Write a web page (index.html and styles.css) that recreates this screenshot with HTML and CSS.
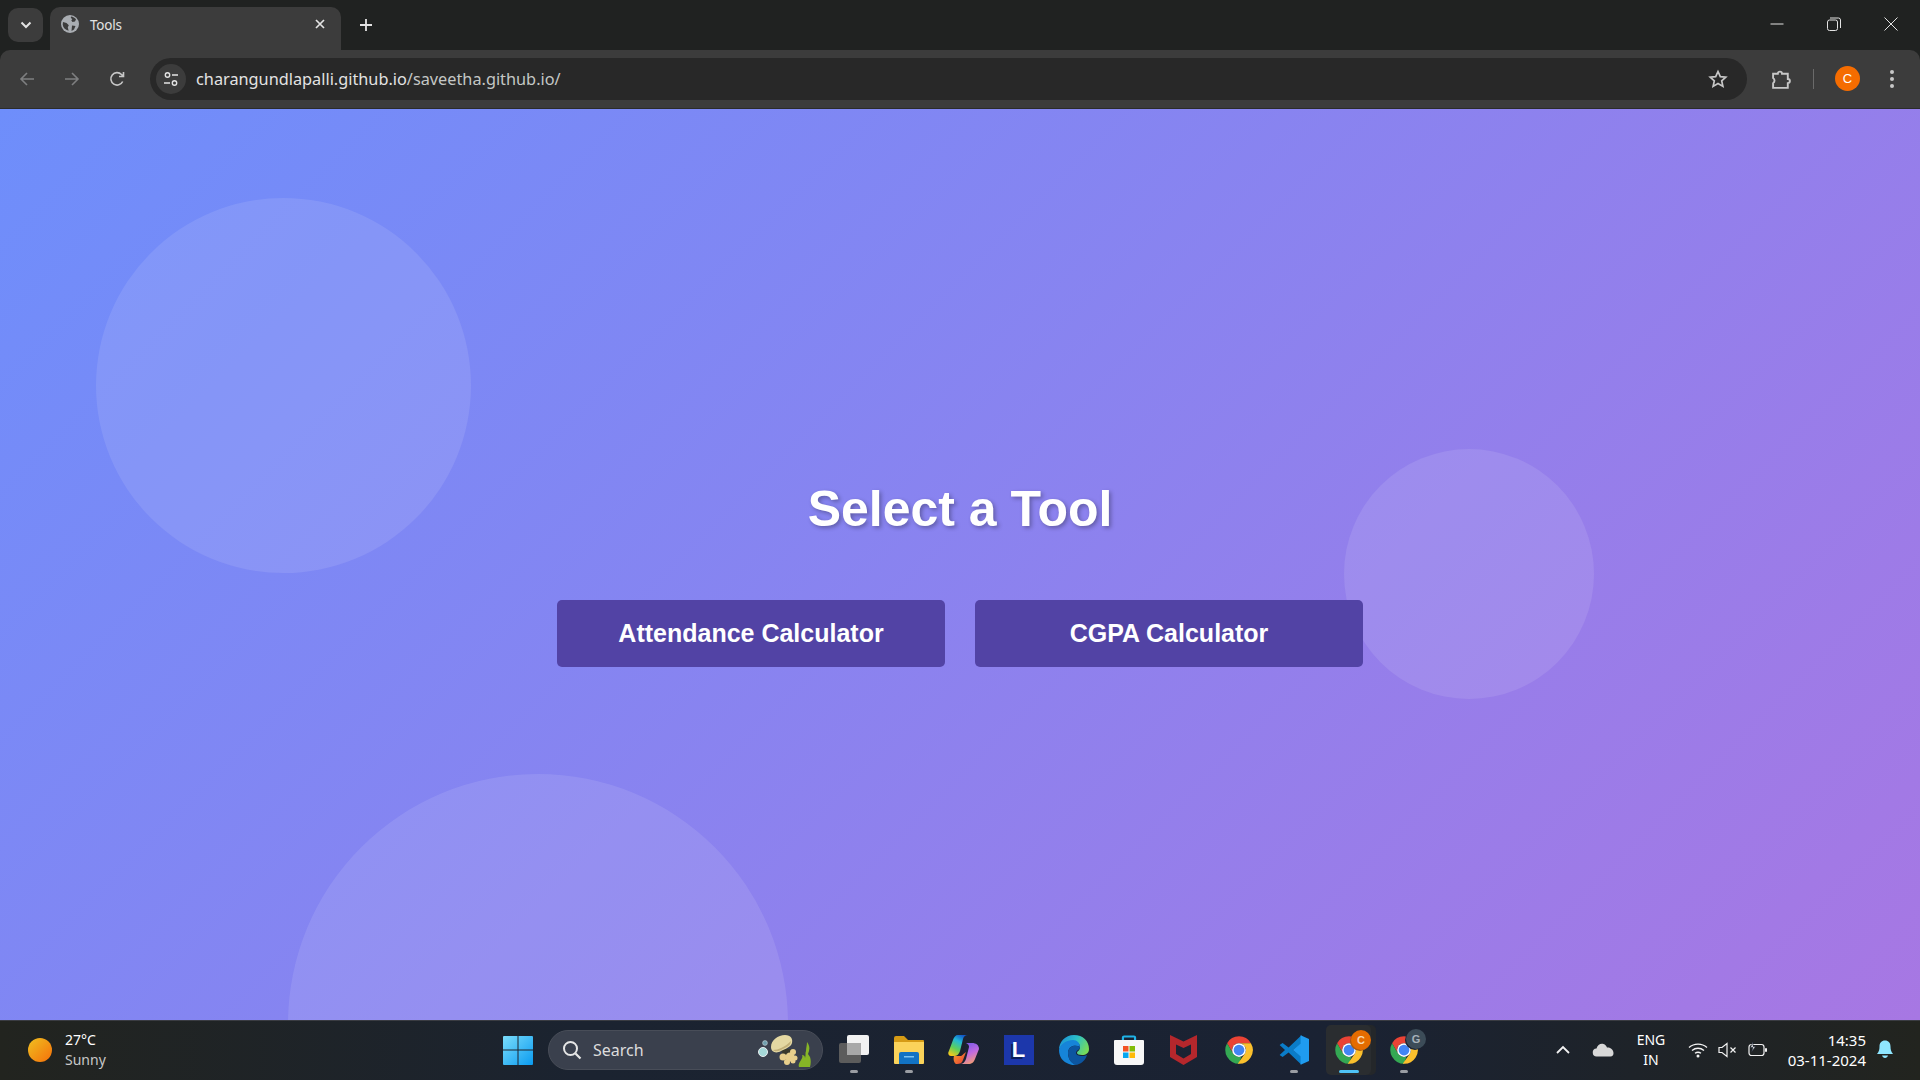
FILE: index.html
```html
<!DOCTYPE html>
<html lang="en">
<head>
    <meta charset="UTF-8">
    <title>Tools</title>
    <link rel="stylesheet" href="styles.css">
</head>
<body>

<svg class="defs" width="0" height="0">
    <symbol id="chrome" viewBox="0 0 48 48">
        <path fill="#ea4335" d="M24 2A22 22 0 0 1 43.05 13H24A11 11 0 0 0 14.47 29.5L4.95 13A22 22 0 0 1 24 2Z"/>
        <path fill="#34a853" d="M4.95 13L14.47 29.5A11 11 0 0 0 28 34.3L24 46A22 22 0 0 1 4.95 13Z"/>
        <path fill="#fbc02d" d="M43.05 13A22 22 0 0 1 22 46L33.53 29.5A11 11 0 0 0 24 13Z"/>
        <circle cx="24" cy="24" r="11" fill="#fff"/>
        <circle cx="24" cy="24" r="8.6" fill="#4285f4"/>
    </symbol>
</svg>

<!-- Browser tab strip -->
<div class="tabstrip">
    <div class="tab-search">
        <svg width="12" height="8" viewBox="0 0 12 8"><path d="M1.5 1.5L6 6l4.5-4.5" fill="none" stroke="#e3e3e3" stroke-width="2"/></svg>
    </div>
    <div class="tab">
        <svg class="tab-globe" width="18" height="18" viewBox="0 0 18 18">
            <circle cx="9" cy="9" r="9" fill="#a9adb2"/>
            <path fill="#3c3c3c" d="M10 1.500c2 .3 3.800 1.300 5 2.800l-1 2.200-2.500.5-1.200-1.500 1-1.500-1.500-1zM2 7l3.500 1 2.300 2.200-1 2 .8 3.500C4.200 15 2 12.500 1.700 9.500zM11 10.500l3.500.5-1.500 3.500-2.500 1.500z"/>
        </svg>
        <span class="tab-title">Tools</span>
        <svg class="tab-close" width="10" height="10" viewBox="0 0 10 10"><path d="M1 1l8 8M9 1l-8 8" stroke="#e3e3e3" stroke-width="1.700"/></svg>
    </div>
    <svg class="new-tab" width="14" height="14" viewBox="0 0 14 14"><path d="M7 1v12M1 7h12" stroke="#e3e3e3" stroke-width="1.800"/></svg>
    <div class="window-controls">
        <svg width="14" height="14" viewBox="0 0 14 14"><path d="M0.500 7h13" stroke="#e3e3e3"/></svg>
        <svg width="14" height="14" viewBox="0 0 14 14"><rect x="0.500" y="3" width="10" height="10.500" rx="2" fill="none" stroke="#e3e3e3"/><path d="M3 1h8.500a2 2 0 0 1 2 2v8" fill="none" stroke="#e3e3e3"/></svg>
        <svg width="14" height="14" viewBox="0 0 14 14"><path d="M0.500 .5l13 13M13.500 .5l-13 13" stroke="#e3e3e3"/></svg>
    </div>
</div>

<!-- Address bar -->
<div class="toolbar">
    <svg class="nav-icon" width="16" height="16" viewBox="0 0 16 16"><path d="M15 8H2M8 2L2 8l6 6" fill="none" stroke="#7e7f80" stroke-width="1.600"/></svg>
    <svg class="nav-icon" width="16" height="16" viewBox="0 0 16 16"><path d="M1 8h13M8 2l6 6-6 6" fill="none" stroke="#7e7f80" stroke-width="1.600"/></svg>
    <svg class="nav-icon" width="16" height="16" viewBox="0 0 16 16"><path d="M13.700 10.500A6.200 6.200 0 1 1 12.500 3.500L14.500 5.500M14.500 1v4.500H10" fill="none" stroke="#c7c7c7" stroke-width="1.600"/></svg>
    <div class="omnibox">
        <div class="site-chip">
            <svg width="16" height="16" viewBox="0 0 16 16"><circle cx="4.500" cy="4" r="2.200" fill="none" stroke="#e3e3e3" stroke-width="1.400"/><path d="M9 4h6M1 12h6" stroke="#e3e3e3" stroke-width="1.400"/><circle cx="11.500" cy="12" r="2.200" fill="none" stroke="#e3e3e3" stroke-width="1.400"/></svg>
        </div>
        <span class="url">charangundlapalli.github.io<span class="url-path">/saveetha.github.io/</span></span>
        <svg class="star" width="20" height="20" viewBox="0 0 20 20"><path d="M10 2.500l2.300 5.100 5.500.6-4.100 3.700 1.200 5.500L10 14.600l-4.900 2.800 1.200-5.500-4.100-3.700 5.500-.6z" fill="none" stroke="#c7c7c7" stroke-width="1.700"/></svg>
    </div>
    <svg class="puzzle" width="21" height="21" viewBox="0 0 20 20"><path d="M2 4.500h4.500a2 2 0 0 1 4 0H16v5a2 2 0 0 1 0 4v4.500H2v-4.500a3 3 0 0 0 0-5z" fill="none" stroke="#c7c7c7" stroke-width="1.800"/></svg>
    <div class="toolbar-sep"></div>
    <div class="avatar">C</div>
    <svg class="kebab" width="4" height="18" viewBox="0 0 4 18"><circle cx="2" cy="2" r="2" fill="#c7c7c7"/><circle cx="2" cy="9" r="2" fill="#c7c7c7"/><circle cx="2" cy="16" r="2" fill="#c7c7c7"/></svg>
</div>

<!-- Page -->
<div class="page">
    <div class="circle circle-one"></div>
    <div class="circle circle-two"></div>
    <div class="circle circle-three"></div>
    <div class="page-content">
        <h1>Select a Tool</h1>
        <div class="tool-buttons">
            <a class="tool-button">Attendance Calculator</a>
            <a class="tool-button">CGPA Calculator</a>
        </div>
    </div>
</div>

<!-- Windows taskbar -->
<div class="taskbar">
    <div class="weather">
        <div class="sun"></div>
        <div class="weather-text">
            <span>27°C</span>
            <span class="weather-sub">Sunny</span>
        </div>
    </div>

    <div class="task-icons">
        <div class="slot">
            <svg width="30" height="30" viewBox="0 0 30 30">
                <defs><linearGradient id="win" x1="0" y1="0" x2="1" y2="1"><stop offset="0" stop-color="#7adcfb"/><stop offset="1" stop-color="#0a9bf0"/></linearGradient></defs>
                <path fill="url(#win)" d="M1 1h13.500v13.500H0V2a1 1 0 0 1 1-1zM15.500 1H29a1 1 0 0 1 1 1v12.500H15.500zM0 15.500h14.500V30H1a1 1 0 0 1-1-1zM15.500 15.500H30V29a1 1 0 0 1-1 1H15.500z"/>
            </svg>
        </div>
        <div class="search">
            <svg width="20" height="20" viewBox="0 0 20 20"><circle cx="8.500" cy="8.500" r="6.500" fill="none" stroke="#e6e6e6" stroke-width="2"/><path d="M13.500 13.500l5 5" stroke="#e6e6e6" stroke-width="2.200"/></svg>
            <span class="search-label">Search</span>
            <svg class="jelly" width="60" height="36" viewBox="0 0 60 36">
                <circle cx="6" cy="20" r="4.500" fill="#a5d8d8" stroke="#e8eef0"/>
                <circle cx="8" cy="11" r="2.400" fill="#6f9fae" stroke="#c8d6dc" stroke-width=".6"/>
                <path fill="#3a3a2c" d="M24 17h10l2 6H26z"/>
                <path fill="#e4d8a2" d="M14 15C14 8 21 3 28 3c6 0 8 4 7 8-1 4-7 6-11 8-5 3-10 1-10-4z"/>
                <path fill="#c2b078" d="M16 18c5 0 12-3 18-9 0 3-2 5-6 7-4 2-9 5-12 2z"/>
                <g fill="#e8cf8c">
                    <circle cx="36" cy="20" r="3"/>
                    <circle cx="26" cy="25" r="3.500"/>
                    <circle cx="33" cy="25" r="4.500"/>
                    <circle cx="38" cy="26" r="2.500"/>
                    <circle cx="30" cy="30" r="3"/>
                    <circle cx="36" cy="29" r="2.500"/>
                </g>
                <path fill="#86b526" d="M42 35c-1-3 1-5 2-7 1-2 2-3 1-5 2 0 3 1 3 3 1-3 0-5 1-7 0-3 1-6 1-9 2 3 3 5 2 9l-1 3 2 3c1 3 1 6 0 10z"/>
            </svg>
        </div>
        <div class="slot running">
            <svg width="30" height="30" viewBox="0 0 30 30"><rect x="0" y="8" width="22" height="20" rx="2" fill="#5c5c5c"/><rect x="8" y="0" width="22" height="20" rx="2" fill="#f2f2f2"/><rect x="8" y="8" width="14" height="12" fill="#a8a8a8"/></svg>
        </div>
        <div class="slot running">
            <svg width="32" height="30" viewBox="0 0 32 30"><path fill="#d69b15" d="M1 3a2 2 0 0 1 2-2h8l4 4h15a1 1 0 0 1 1 1v5H1z"/><path fill="#fbd35a" d="M1 7h30v21a1 1 0 0 1-1 1H2a1 1 0 0 1-1-1z"/><path fill="#1273c4" d="M6 19a2 2 0 0 1 2-2h16a2 2 0 0 1 2 2v10H6z"/><rect x="11" y="21" width="10" height="1.500" fill="#7cc4f2"/></svg>
        </div>
        <div class="slot">
            <svg width="31" height="29" viewBox="0 0 31 29">
                <defs>
                    <linearGradient id="cop1" x1=".7" y1="0" x2=".2" y2="1"><stop offset="0" stop-color="#1257c8"/><stop offset=".3" stop-color="#22b8d8"/><stop offset=".65" stop-color="#5ed05a"/><stop offset="1" stop-color="#f8c91c"/></linearGradient>
                    <linearGradient id="cop2" x1=".3" y1="0" x2=".7" y2="1"><stop offset="0" stop-color="#7a5ae8"/><stop offset=".5" stop-color="#c06ae0"/><stop offset="1" stop-color="#f7a06a"/></linearGradient>
                    <linearGradient id="cop3" x1="0" y1="0" x2="1" y2="1"><stop offset="0" stop-color="#f7a02a"/><stop offset="1" stop-color="#e83a3a"/></linearGradient>
                </defs>
                <path fill="url(#cop2)" d="M17 8h7c4 0 7 2 7 6l-4 10c-1 3-3 5-7 5h-8c3 0 5-2 6-5l3-12c.3-2-2-4-4-4z"/>
                <path fill="url(#cop3)" d="M6 21h7l5-4-3 8c-1 3-3 4-6 4H8c-2-1-3-5-2-8z"/>
                <path fill="url(#cop1)" d="M10 0h10c-3 0-4.500 2-5 4l-3 12c-.8 3-3 5-6 5H3c-2 0-3.300-2-2.500-4L5 5c1-3 2.500-5 5-5z"/>
                <path fill="#1c2129" d="M15.500 7.500l2 .5-3 12-2.500 1z" opacity=".85"/>
            </svg>
        </div>
        <div class="slot">
            <div class="l-tile">L</div>
        </div>
        <div class="slot">
            <svg width="30" height="30" viewBox="0 0 30 30">
                <defs>
                    <linearGradient id="edge1" x1="0" y1=".2" x2="1" y2=".6"><stop offset="0" stop-color="#1a8ed8"/><stop offset=".5" stop-color="#2cc0c8"/><stop offset="1" stop-color="#78dc58"/></linearGradient>
                </defs>
                <path fill="url(#edge1)" d="M15 0c9 0 15 6 15 14 0 4-3 6-7 6-3 0-5-1-5-2 0-2 3-2 3-6 0-4-4-6-7-6C7 6 1 11 0 15 0 7 6 0 15 0z"/>
                <path fill="#1684d8" d="M0 15C1 9 8 5 14 5c4 0 7 3 7 7-5-3-12-1-12 6 0 6 4 11 9 12-3 .5-6 0-8-1C4 27 0 22 0 15z"/>
                <path fill="#0c55a0" d="M9 18c0-7 7-9 12-6 0 3-4 3-4 6 0 2 3 3 6 3 2 0 4-.5 5-1-1 3-3 7-8 9-2 1-4 1-5 .5-4-2.500-6-6.500-6-11.500z"/>
            </svg>
        </div>
        <div class="slot">
            <svg width="30" height="30" viewBox="0 0 30 30">
                <path d="M9.500 5V2.500a1 1 0 0 1 1-1h9a1 1 0 0 1 1 1V5" fill="none" stroke="#1fb3e8" stroke-width="2" transform="translate(-1.500 0) scale(1.100 1)"/>
                <path fill="#f7f7f7" d="M1 5h28a1 1 0 0 1 1 1v21a3 3 0 0 1-3 3H3a3 3 0 0 1-3-3V6a1 1 0 0 1 1-1z"/>
                <rect x="9" y="11" width="5.500" height="5.500" fill="#f35325"/><rect x="15.500" y="11" width="5.500" height="5.500" fill="#81bc06"/>
                <rect x="9" y="17.500" width="5.500" height="5.500" fill="#05a6f0"/><rect x="15.500" y="17.500" width="5.500" height="5.500" fill="#ffba08"/>
            </svg>
        </div>
        <div class="slot">
            <svg width="27" height="30" viewBox="0 0 27 30"><path fill="#b5272c" fill-rule="evenodd" d="M0 0l13.500 6.500L27 0v22l-13.500 8L0 22zM6 9.500V19l7.500 4.500L21 19V9.500l-7.500 3.500z"/></svg>
        </div>
        <div class="slot">
            <svg width="30" height="30"><use href="#chrome"/></svg>
        </div>
        <div class="slot running">
            <svg width="30" height="30" viewBox="0 0 100 100">
                <path fill="#0a7cc8" fill-rule="evenodd" d="M74 2L32 42 12 27 2 33l18 17L2 67l10 6 20-15 42 40 10-50-10-50zM74 28L46 50l28 22z"/>
                <path fill="#1f9cf0" d="M72 1l28 12v74L72 99z M72 28v44L46 50z" fill-rule="evenodd"/>
            </svg>
        </div>
        <div class="slot current active">
            <svg width="30" height="30"><use href="#chrome"/></svg>
            <span class="badge badge-orange">C</span>
        </div>
        <div class="slot running">
            <svg width="30" height="30"><use href="#chrome"/></svg>
            <span class="badge badge-grey">G</span>
        </div>
    </div>

    <div class="tray">
        <svg class="tray-chevron" width="14" height="9" viewBox="0 0 14 9"><path d="M1 8l6-6 6 6" fill="none" stroke="#f2f2f2" stroke-width="1.800"/></svg>
        <svg class="tray-cloud" width="22" height="14" viewBox="0 0 22 14"><path fill="#d8d8d8" d="M5 13.500a4 4 0 0 1-.5-8C5.500 2 8.500 0 11.500 1c1.800.6 3 2 3.500 3.500C18.500 4 21.500 7 21.500 10c0 2-1 3.500-3 3.500z"/></svg>
        <div class="lang"><span>ENG</span><span>IN</span></div>
        <svg class="tray-wifi" width="20" height="16" viewBox="0 0 20 16"><path d="M1 5.500c5-4.500 13-4.500 18 0M4 8.500c3.500-3 8.500-3 12 0M7 11.300c1.800-1.300 4.200-1.300 6 0" fill="none" stroke="#f2f2f2" stroke-width="1.300"/><circle cx="10" cy="14" r="1.500" fill="#f2f2f2"/></svg>
        <svg class="tray-volume" width="20" height="16" viewBox="0 0 20 16"><path d="M1 5.500h3L9 1.500v13l-5-4H1z" fill="none" stroke="#f2f2f2" stroke-width="1.200"/><path d="M12.500 5.500l5 5M17.500 5.500l-5 5" stroke="#f2f2f2" stroke-width="1.200"/></svg>
        <svg class="tray-battery" width="20" height="16" viewBox="0 0 20 16"><rect x="1" y="2.500" width="15" height="11" rx="2.500" fill="none" stroke="#f2f2f2" stroke-width="1.200"/><rect x="17" y="6" width="2" height="4" rx="1" fill="#f2f2f2"/><path d="M5 0L2.500 5.500H5L3.500 10 7.500 4.500H5z" fill="#f2f2f2" stroke="#1a2130" stroke-width=".6"/></svg>
        <div class="clock"><span>14:35</span><span>03-11-2024</span></div>
        <svg class="tray-bell" width="16" height="20" viewBox="0 0 16 20"><path fill="#8fe6ff" d="M8 .5c3.500 0 5.500 2.500 5.500 6 0 3 .5 5 2.500 7.500H0c2-2.500 2.500-4.500 2.500-7.500 0-3.500 2-6 5.500-6z"/><path fill="#8fe6ff" d="M5 15.500h6c-.5 1.500-1.500 2.500-3 2.500s-2.500-1-3-2.500z"/></svg>
    </div>
</div>

</body>
</html>
```

FILE: styles.css
```css
* {
    box-sizing: border-box;
}
html, body {
    margin: 0;
    height: 100%;
}
body {
    width: 1920px;
    height: 1080px;
    overflow: hidden;
    display: flex;
    flex-direction: column;
    font-family: "Liberation Sans", Arial, sans-serif;
    background-color: #202221;
}
.defs {
    position: absolute;
}

/* Browser chrome */
.tabstrip {
    height: 50px;
    flex: none;
    display: flex;
    align-items: flex-start;
    background-color: #202221;
    color: #e3e3e3;
}
.tab-search {
    width: 35px;
    height: 34px;
    margin: 8px 7px 0 8px;
    display: flex;
    align-items: center;
    justify-content: center;
    border-radius: 10px;
    background-color: #3c3c3c;
}
.tab {
    width: 291px;
    height: 43px;
    margin-top: 7px;
    padding: 0 16px 10px 11px;
    display: flex;
    align-items: center;
    border-radius: 10px 10px 0 0;
    background-color: #3c3c3c;
}
.tab-globe {
    margin-right: 11px;
}
.tab-title {
    flex: 1;
    padding-top: 2px;
    font-family: "Noto Sans", sans-serif;
    font-size: 13.5px;
    letter-spacing: -0.2px;
}
.new-tab {
    margin: 18px 0 0 18px;
}
.window-controls {
    margin: 17px 22px 0 auto;
    display: flex;
    gap: 43px;
}
.toolbar {
    height: 59px;
    flex: none;
    display: flex;
    align-items: center;
    padding-left: 19px;
    border-bottom: 1px solid #2b2c2c;
    border-radius: 10px 10px 0 0;
    background-color: #3c3c3c;
}
.nav-icon {
    margin-right: 29px;
}
.nav-icon:nth-child(3) {
    margin-right: 25px;
}
.omnibox {
    width: 1597px;
    height: 42px;
    display: flex;
    align-items: center;
    padding: 0 19px 0 6px;
    border-radius: 21px;
    background-color: #282828;
    color: #e3e3e3;
}
.site-chip {
    width: 30px;
    height: 30px;
    margin-right: 10px;
    display: flex;
    align-items: center;
    justify-content: center;
    border-radius: 50%;
    background-color: #3c3c3c;
}
.url {
    flex: 1;
    font-family: "Noto Sans", sans-serif;
    font-size: 16.3px;
}
.url-path {
    color: #c4c7c5;
}
.puzzle {
    margin-left: 24px;
}
.toolbar-sep {
    width: 1px;
    height: 20px;
    margin: 0 21px 0 21px;
    background-color: #6a6a6a;
}
.avatar {
    width: 25px;
    height: 25px;
    margin-top: -2px;
    display: flex;
    align-items: center;
    justify-content: center;
    border-radius: 50%;
    background-color: #f56c00;
    color: #fff;
    font-size: 13px;
}
.kebab {
    margin-left: 30px;
}

/* Page */
.page {
    flex: 1;
    position: relative;
    overflow: hidden;
    display: flex;
    align-items: center;
    justify-content: center;
    background: linear-gradient(135deg, #6e8efb, #a777e3);
    color: #fff;
}
.circle {
    position: absolute;
    border-radius: 50%;
    background-color: rgba(255, 255, 255, 0.1);
}
.circle-one {
    width: 375px;
    height: 375px;
    left: 96px;
    top: 89px;
}
.circle-two {
    width: 250px;
    height: 250px;
    left: 1344px;
    top: 340px;
}
.circle-three {
    width: 500px;
    height: 500px;
    left: 288px;
    top: 665px;
}
.page-content {
    position: relative;
    padding-top: 18px;
    text-align: center;
}
h1 {
    margin: 0 0 62px;
    font-size: 50px;
    font-weight: bold;
    text-shadow: 2px 2px 4px rgba(0, 0, 0, 0.3);
}
.tool-buttons {
    display: flex;
    gap: 30px;
}
.tool-button {
    width: 388px;
    height: 67px;
    display: flex;
    align-items: center;
    justify-content: center;
    border-radius: 5px;
    background-color: #5243a5;
    color: #fff;
    font-size: 25px;
    font-weight: bold;
}

/* Taskbar */
.taskbar {
    height: 60px;
    flex: none;
    display: grid;
    grid-template-columns: 490px auto 1fr;
    align-items: center;
    padding-bottom: 2px;
    border-top: 1px solid #3a3c42;
    background: linear-gradient(90deg, #22241f 0%, #1b2330 30%, #1a2233 70%, #22241f 100%);
    color: #fff;
    font-family: "Noto Sans", sans-serif;
}
.weather {
    display: flex;
    align-items: center;
    padding-left: 28px;
}
.sun {
    width: 24px;
    height: 24px;
    margin-right: 13px;
    border-radius: 50%;
    background: linear-gradient(135deg, #f0c020, #f5700a);
}
.weather-text {
    display: flex;
    flex-direction: column;
    font-size: 14px;
    line-height: 20px;
}
.weather-sub {
    color: #c8c8c8;
}
.task-icons {
    display: flex;
    align-items: center;
    height: 100%;
}
.slot {
    position: relative;
    width: 55px;
    height: 57px;
    display: flex;
    align-items: center;
    justify-content: center;
}
.slot.running::after, .slot.active::after {
    content: "";
    position: absolute;
    left: 50%;
    bottom: 5px;
    width: 8px;
    height: 3px;
    margin-left: -4px;
    border-radius: 2px;
    background-color: #9a9da3;
}
.slot.active::after {
    width: 20px;
    margin-left: -10px;
    background-color: #4fc3f7;
}
.current::before {
    content: "";
    position: absolute;
    left: 5px;
    top: 4px;
    width: 45px;
    height: 50px;
    border-radius: 5px;
    background-color: #2a2d30;
    box-shadow: 5px 0 0 #24272a;
}
.current svg {
    position: relative;
}
.badge {
    position: absolute;
    width: 20px;
    height: 20px;
    top: 9px;
    right: 5px;
    display: flex;
    align-items: center;
    justify-content: center;
    border-radius: 50%;
    font-size: 11px;
    font-weight: bold;
    font-family: "Liberation Sans", sans-serif;
}
.badge-orange {
    background-color: #e56c00;
    color: #f7d9b5;
    box-shadow: -1px 1px 0 #a85a10;
}
.badge-grey {
    top: 8px;
    background-color: #3c4c58;
    color: #a7b2ba;
    box-shadow: -1px 1px 0 #1a2130;
}
.search {
    width: 275px;
    height: 40px;
    margin: 0 3px;
    display: flex;
    align-items: center;
    padding: 0 5px 0 13px;
    border: 1px solid #484d58;
    border-radius: 20px;
    background-color: #3a404d;
}
.search-label {
    flex: 1;
    margin-left: 11px;
    color: #dcdcdc;
    font-size: 16px;
}
.l-tile {
    width: 30px;
    height: 30px;
    display: flex;
    align-items: center;
    justify-content: center;
    background-color: #1c37ab;
    color: #fff;
    font-family: "Liberation Sans", sans-serif;
    font-size: 22px;
    font-weight: bold;
    text-shadow: -2px 2px 0 #0b1f5c;
}
.tray {
    position: relative;
    height: 100%;
    display: flex;
    align-items: center;
    padding-left: 125px;
    font-size: 14px;
    line-height: 20px;
}
.tray-cloud {
    margin-left: 22px;
}
.lang {
    width: 40px;
    margin-left: 17px;
    display: flex;
    flex-direction: column;
    align-items: center;
}
.tray-wifi {
    margin-left: 17px;
}
.tray-volume {
    margin-left: 10px;
}
.tray-battery {
    margin-left: 10px;
}
.clock {
    width: 80px;
    margin-left: 18px;
    display: flex;
    flex-direction: column;
    align-items: flex-end;
    font-size: 15px;
}
.tray-bell {
    margin-left: 11px;
}
```
